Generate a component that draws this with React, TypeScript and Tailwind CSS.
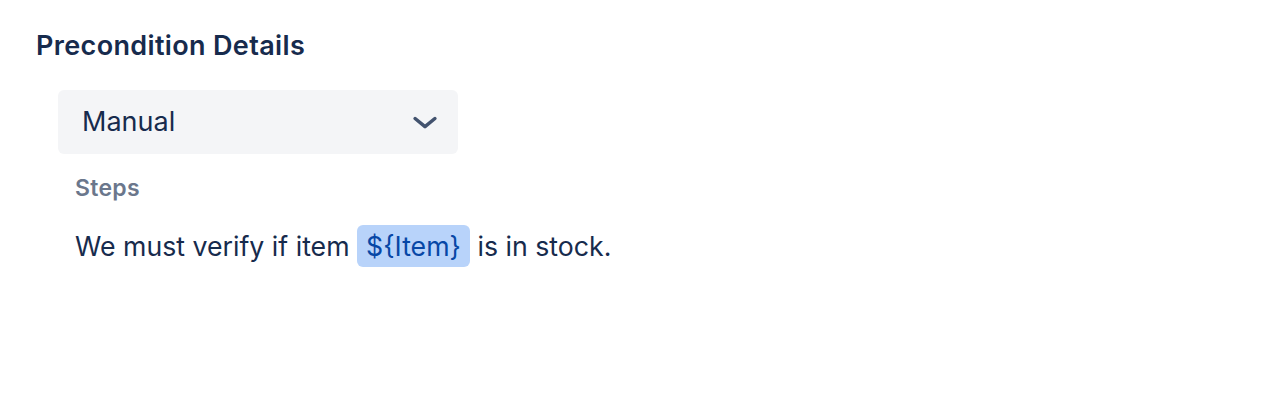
export default function App() {
  return (
    <div className="min-h-screen bg-white pl-9 pt-[26px] font-['Inter',sans-serif] text-[#172b4d]">
      <h2 className="text-[27px] font-semibold leading-[40px] tracking-[0.35px]">Precondition Details</h2>
      <div className="ml-[22px] mt-[24px] w-[400px]">
        <div className="flex h-[64px] items-center justify-between rounded-md bg-[#f4f5f7] pl-6 pr-[19px]">
          <span className="text-[27px]">Manual</span>
          <svg width="28" height="28" viewBox="0 0 24 24" fill="none" stroke="#42526e" strokeWidth="3" strokeLinecap="round" strokeLinejoin="round">
            <path d="M3.5 9l8.5 7 8.5-7" />
          </svg>
        </div>
      </div>
      <div className="ml-[39px] mt-[18px]">
        <div className="text-[23px] font-semibold leading-[32px] tracking-[0.3px] text-[#6b778c]">Steps</div>
        <p className="mt-[22px] text-[26.7px] leading-[40px]">
          We must verify if item{' '}
          <span className="rounded-md bg-[#b8d3fa] px-[9px] py-[5px] text-[#0747a6]">{'${Item}'}</span>{' '}
          is in stock.
        </p>
      </div>
    </div>
  );
}
